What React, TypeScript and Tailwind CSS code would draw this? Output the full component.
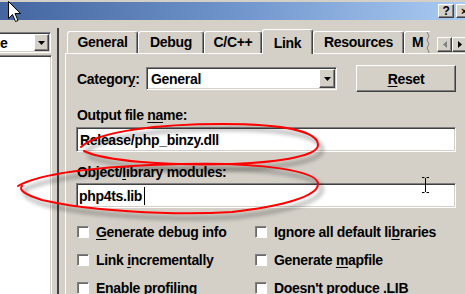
import type { ReactNode } from "react";

const sunken =
  "border border-t-[#808080] border-l-[#808080] border-b-white border-r-white shadow-[inset_1px_1px_0_#404040,inset_-1px_-1px_0_#d4d0c8]";
const raised =
  "border border-t-white border-l-white border-b-[#404040] border-r-[#404040] shadow-[inset_-1px_-1px_0_#808080]";

function U({ children }: { children: ReactNode }) {
  return <span className="underline decoration-1 underline-offset-[2px]">{children}</span>;
}

function DownArrow() {
  return (
    <svg width="7" height="4" viewBox="0 0 7 4">
      <path d="M0 0h7L3.5 4z" fill="#000" />
    </svg>
  );
}

function Tab({ label, w, active }: { label: string; w: number; active?: boolean }) {
  return (
    <div
      className={
        active
          ? "relative z-10 -mb-px h-[25px] shrink-0 rounded-t-[3px] border-t border-l border-r border-t-white border-l-white border-r-[#404040] bg-[#d4d0c8] pt-[5px] text-center shadow-[inset_-1px_0_0_#808080]"
          : "h-[22px] shrink-0 rounded-t-[3px] border-t border-l border-r border-t-white border-l-white border-r-[#404040] pt-[2px] text-center shadow-[inset_-1px_0_0_#808080]"
      }
      style={{ width: w }}
    >
      {label}
    </div>
  );
}

function Check({ children }: { children: ReactNode }) {
  return (
    <div className="flex h-[16px] items-center gap-[7px] leading-[16px]">
      <div className="h-[12px] w-[12px] shrink-0 border border-t-[#808080] border-l-[#808080] border-b-white border-r-white bg-white shadow-[inset_1px_1px_0_#6a6a6a]" />
      <span className="whitespace-nowrap">{children}</span>
    </div>
  );
}

export default function App() {
  return (
    <div className="relative flex h-[294px] w-[465px] flex-col overflow-hidden bg-[#d4d0c8] pt-[2px] font-['Liberation_Sans',Arial,sans-serif] text-[14px] font-bold leading-[16px] tracking-[-0.3px] text-black">
      {/* title bar */}
      <div className="flex h-[18px] shrink-0 items-center justify-end bg-gradient-to-r from-[#44659f] via-[#6f94cb] to-[#aacbf2]">
        <div className={`${raised} flex h-[14px] w-[16px] items-center justify-center bg-[#d4d0c8] text-[12px] leading-none`}>?</div>
        <div className={`${raised} -mr-[7px] ml-[2px] flex h-[14px] w-[16px] items-center justify-center bg-[#d4d0c8] text-[11px] leading-none`}>×</div>
      </div>

      <div className="flex min-h-0 flex-1">
        {/* left pane */}
        <div className="flex w-[53px] shrink-0 flex-col">
          <div className="mt-[12px] flex h-[21px] w-[51px] items-center border-y border-r border-t-[#808080] border-b-white border-r-white bg-white py-[1px] pr-[1px] shadow-[inset_0_1px_0_#404040,inset_-1px_-1px_0_#d4d0c8]">
            <span className="flex-1">e</span>
            <div className={`${raised} flex h-[17px] w-[15px] items-center justify-center bg-[#d4d0c8]`}>
              <DownArrow />
            </div>
          </div>
          <div className="mt-[2px] w-[52px] flex-1 border-t border-r border-t-[#808080] border-r-white bg-white shadow-[inset_0_1px_0_#404040,inset_-1px_0_0_#d4d0c8]" />
        </div>

        {/* splitter */}
        <div className="ml-[4px] mt-[8px] w-[2px] shrink-0 bg-[#404040]" />

        {/* property page */}
        <div className="ml-[6px] flex w-[420px] shrink-0 flex-col">
          <div className="mt-[9px] flex h-[24px] shrink-0 items-end pl-[2px]">
            <Tab label="General" w={71} />
            <Tab label="Debug" w={66} />
            <Tab label="C/C++" w={58} />
            <Tab label="Link" w={51} active />
            <Tab label="Resources" w={91} />
            <div className="relative h-[22px] w-[26px] shrink-0 overflow-hidden rounded-tl-[3px] border-t border-l border-t-white border-l-white pl-[7px] pt-[2px]">
              M
              <svg className="absolute right-0 top-0" width="5" height="22" viewBox="0 0 5 22">
                <path d="M2 0l2 4-2 4 2 4-2 4 2 4-1 2" stroke="#808080" fill="none" />
              </svg>
            </div>
            <div className="mb-px ml-[7px] flex h-[15px]">
              <div className={`${raised} flex h-[15px] w-[15px] items-center justify-center bg-[#d4d0c8]`}>
                <svg width="4" height="7" viewBox="0 0 4 7">
                  <path d="M4 0v7L0 3.5z" fill="#808080" />
                </svg>
              </div>
              <div className={`${raised} flex h-[15px] w-[15px] items-center justify-center bg-[#d4d0c8]`}>
                <svg width="4" height="7" viewBox="0 0 4 7">
                  <path d="M0 0v7l4-3.5z" fill="#000" />
                </svg>
              </div>
            </div>
          </div>

          <div className="flex-1 border-t border-l border-t-white border-l-white pl-[10px] pt-[11px]">
            <div className="flex h-[27px] items-center">
              <div className="w-[70px] pl-[1px]">
                Categor<U>y</U>:
              </div>
              <div className={`${sunken} flex h-[23px] w-[191px] items-center bg-white py-[1px] pl-[4px] pr-[1px]`}>
                <span className="flex-1">General</span>
                <div className={`${raised} flex h-[19px] w-[16px] items-center justify-center bg-[#d4d0c8]`}>
                  <DownArrow />
                </div>
              </div>
              <div className={`${raised} ml-[19px] flex h-[27px] w-[100px] items-center justify-center`}>
                <U>R</U>eset
              </div>
            </div>

            <div className="mt-[15px] h-[16px] pl-[1px]">
              Output file <U>na</U>me:
            </div>
            <div className={`${sunken} mt-[4px] flex h-[25px] w-[380px] items-center bg-white pl-[3px]`}>
              Release/php_binzy.dll
            </div>

            <div className="mt-[12px] h-[16px] pl-[1px]">
              Object/<U>l</U>ibrary modules:
            </div>
            <div className={`${sunken} mt-[3px] flex h-[25px] w-[380px] items-center bg-white pl-[2px]`}>
              php4ts.lib
              <span className="ml-[2px] h-[18px] w-px bg-black" />
            </div>

            <div className="mt-[16px] grid grid-cols-[178px_1fr] gap-y-[12px] pl-[1px]">
              <Check>
                <U>G</U>enerate debug info
              </Check>
              <Check>
                Ignore all default li<U>b</U>raries
              </Check>
              <Check>
                Link <U>i</U>ncrementally
              </Check>
              <Check>
                Generate <U>m</U>apfile
              </Check>
              <Check>
                Enable <U>p</U>rofiling
              </Check>
              <Check>
                Doesn't produce .LIB
              </Check>
            </div>
          </div>
        </div>
      </div>

      {/* hand-drawn annotations and cursors */}
      <svg className="pointer-events-none absolute inset-0" width="465" height="294" viewBox="0 0 465 294">
        <defs>
          <filter id="soft" x="-20%" y="-50%" width="140%" height="200%">
            <feGaussianBlur stdDeviation="2" />
          </filter>
        </defs>
        <g transform="translate(4 5)" filter="url(#soft)" stroke="#000" strokeOpacity="0.35" strokeWidth="3" fill="none">
          <path d="M81 147C98 131 160 124 222 124C282 124 318 131 318 145C318 155 285 162 232 164C168 166 104 161 84 151" />
          <path d="M18 186C42 172 104 166 182 164C262 162 318 171 318 184C318 196 284 206 232 212C168 216 84 210 42 200C26 195 18 190 22 186" />
        </g>
        <g stroke="#f00" strokeWidth="2" fill="none" strokeLinecap="round">
          <path d="M81 147C98 131 160 124 222 124C282 124 318 131 318 145C318 155 285 162 232 164C168 166 104 161 84 151" />
          <path d="M18 186C42 172 104 166 182 164C262 162 318 171 318 184C318 196 284 206 232 212C168 216 84 210 42 200C26 195 18 190 22 186" />
        </g>
        <path
          d="M8.5 1.5V18.5L12.5 14.5L15.5 21.5L18 20.5L15 13.5H20.5Z"
          fill="#fff"
          stroke="#000"
          strokeWidth="1"
          strokeLinejoin="miter"
        />
        <path d="M422 177.5h2.5M426.5 177.5h2.5M425.5 178v14M422 192.5h2.5M426.5 192.5h2.5" stroke="#000" strokeWidth="1" />
      </svg>
    </div>
  );
}
